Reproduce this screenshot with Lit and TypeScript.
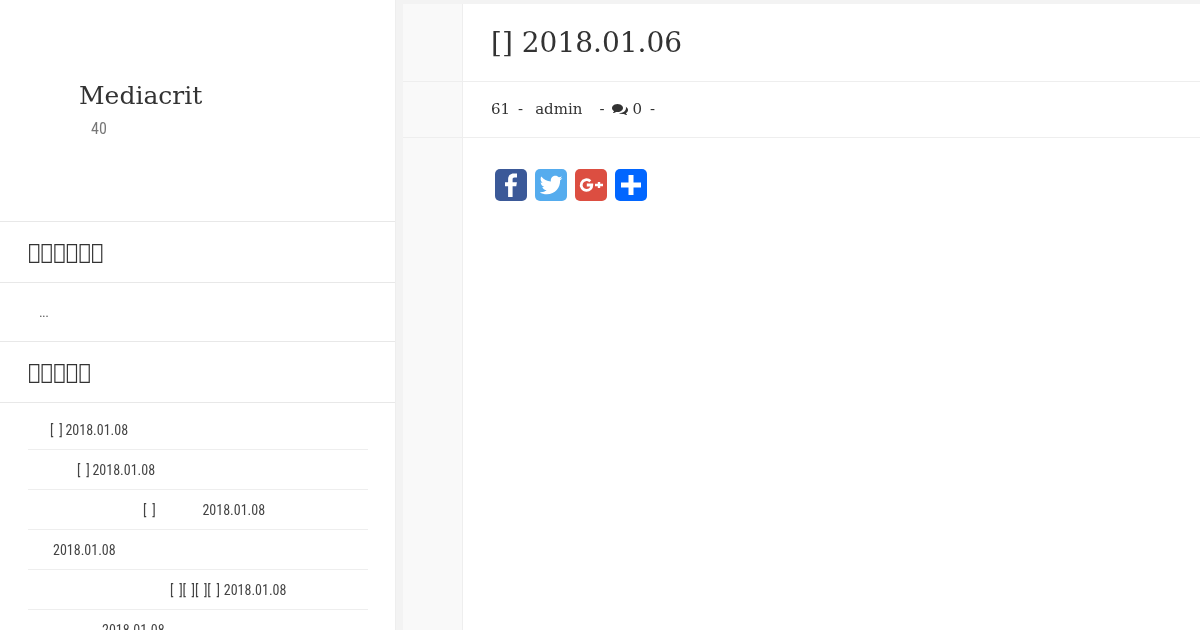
import { LitElement, html, css } from "lit";
import { customElement } from "lit/decorators.js";

@customElement("app-root")
export class AppRoot extends LitElement {
  static styles = css`
    :host { display: block; width: 1200px; height: 630px; overflow: hidden; background: #fff; color: #333; font-family: "DejaVu Serif", serif; }
    .page { display: flex; height: 630px; overflow: hidden; will-change: transform; }
    .side { width: 395px; flex: none; border-right: 1px solid #eee; }
    .gutter { width: 7px; flex: none; background: #f3f3f3; }
    .main { flex: 1; display: grid; grid-template-columns: 60px 1fr; grid-template-rows: 4px 78px 56px 1fr; }
    .strip { grid-column: 1 / 3; background: #f3f3f3; }
    .brand { height: 222px; box-sizing: border-box; padding: 80px 0 0 79px; border-bottom: 1px solid #e8e8e8; }
    .brand h1 { margin: 0; font-size: 25px; font-weight: 400; line-height: 32px; }
    .brand p { margin: 7px 0 0 12px; font: 16px/20px "Roboto", sans-serif; font-stretch: 75%; color: #777; }
    .head { height: 61px; box-sizing: border-box; padding: 0 28px; display: flex; align-items: center; font-size: 21px; border-bottom: 1px solid #e8e8e8; }
    .box { height: 59px; box-sizing: border-box; padding: 0 39px; display: flex; align-items: center; border-bottom: 1px solid #e8e8e8; font: 14px "Roboto", sans-serif; font-stretch: 75%; letter-spacing: -0.6px; color: #666; }
    ul { list-style: none; margin: 0 27px 0 28px; padding: 7px 0 0; }
    li { height: 40px; box-sizing: border-box; border-bottom: 1px solid #eee; display: flex; align-items: center; font: 14px "Roboto", sans-serif; font-stretch: 75%; color: #444; white-space: pre; }
    .br { letter-spacing: -0.25px; }
    .rail { border-right: 1px solid #eee; background: #f9f9f9; }
    .line { border-bottom: 1px solid #eee; }
    .cell { padding-left: 28px; display: flex; align-items: center; }
    h2 { margin: 0; font-size: 28px; font-weight: 400; }
    .meta { font-size: 15px; padding-bottom: 2px; box-sizing: border-box; }
    .m8 { margin-left: 8px; }
    .m12 { margin-left: 12px; }
    .m17 { margin-left: 17px; }
    .m4 { margin-left: 4px; }
    .meta svg { width: 16px; height: 14px; margin-left: 8px; display: block; }
    .share { grid-column: 2; padding: 31px 0 0 32px; display: flex; gap: 8px; align-items: flex-start; }
    .ico { width: 32px; height: 32px; border-radius: 5px; display: block; }
    .tall { grid-row: 4; grid-column: 1; }
  `;
  render() {
    const rows: [number, string, number][] = [
      [22, "[  ]", 3],
      [49, "[  ]", 3],
      [115, "[  ]", 47],
      [25, "", 0],
      [142, "[  ][  ][  ][  ]", 4],
      [74, "", 0],
    ];
    return html`<div class="page">
      <div class="side">
        <div class="brand"><h1>Mediacrit</h1><p>40</p></div>
        <div class="head">\uE000\uE000\uE000\uE000\uE000\uE000</div>
        <div class="box">...</div>
        <div class="head">\uE000\uE000\uE000\uE000\uE000</div>
        <ul>${rows.map(([x, t, g]) => html`<li style="padding-left:${x}px"><span class="br">${t}</span><span style="margin-left:${g}px">2018.01.08</span></li>`)}</ul>
      </div>
      <div class="gutter"></div>
      <div class="main">
        <div class="strip"></div>
        <div class="rail line"></div>
        <div class="cell line"><h2>[] 2018.01.06</h2></div>
        <div class="rail line"></div>
        <div class="cell line meta"><span>61</span><span class="m8">-</span><span class="m12">admin</span><span class="m17">-</span><svg viewBox="0 0 2048 1792"><path fill="#333" d="M1408 768q0 139-94 257t-256.500 186.500-353.500 68.500q-86 0-176-16-124 88-278 128-36 9-86 16h-3q-11 0-20.500-8t-11.500-21q-1-3-1-6.500t.5-6.500 2-6l2.500-5 3.500-5.500 4-5 4.500-5 4-4.500q5-6 23-25t26-29.500 22.500-29 25-38.500 20.500-44q-124-72-195-177t-71-224q0-139 94-257t256.500-186.500 353.500-68.500 353.500 68.500 256.500 186.500 94 257zm640 256q0 120-71 224.500t-195 176.500q10 24 20.500 44t25 38.500 22.500 29 26 29.500 23 25q1 1 4 4.500t4.500 5 4 5 3.500 5.500l2.500 5 2 6 .5 6.500-1 6.500q-3 14-13 22t-22 7q-50-7-86-16-154-40-278-128-90 16-176 16-271 0-472-132 58 4 88 4 161 0 309-45t264-129q125-92 192-212t67-254q0-77-23-152 129 71 204 178t75 230z"/></svg><span class="m4">0</span><span class="m8">-</span></div>
        <div class="rail tall"></div>
        <div class="share">
          <svg class="ico" viewBox="0 0 32 32"><rect width="32" height="32" fill="#3B5998"/><path fill="#fff" d="M22 4.500v4h-2.400c-1.700 0-2 .8-2 2v2.700h4.300l-.6 4h-3.700V28h-4.500V17.200H10v-4h3.100v-3C13.100 6.700 15.400 4.500 18.700 4.500c1.500 0 2.800.1 3.300 0z"/></svg>
          <svg class="ico" viewBox="0 0 32 32"><rect width="32" height="32" fill="#55ACEE"/><path transform="translate(.8 .8) scale(.95)" fill="#fff" d="M28 8.600c-.9.400-1.800.7-2.800.8 1-.6 1.800-1.600 2.200-2.700-1 .6-2 1-3.100 1.200-.9-1-2.200-1.600-3.600-1.600-2.700 0-4.900 2.200-4.900 4.900 0 .4 0 .8.100 1.100-4.100-.2-7.700-2.200-10.100-5.200-.4.700-.7 1.600-.7 2.500 0 1.700.9 3.200 2.200 4.100-.8 0-1.600-.2-2.200-.6v.1c0 2.400 1.700 4.400 3.900 4.800-.4.100-.8.200-1.300.2-.3 0-.6 0-.9-.1.600 2 2.400 3.400 4.600 3.400-1.700 1.300-3.800 2.100-6.100 2.100-.4 0-.8 0-1.200-.1 2.200 1.400 4.800 2.200 7.500 2.200 9.100 0 14-7.500 14-14v-.6c1-.7 1.800-1.600 2.400-2.500z"/></svg>
          <svg class="ico" viewBox="0 0 32 32"><rect width="32" height="32" fill="#DC4E41"/><path fill="none" stroke="#fff" stroke-width="2.800" d="M15.300 12.300A5.300 5.300 0 1 0 11.500 21.300C14.700 21.300 16.800 19.200 16.800 16H11.800"/><path fill="#fff" d="M22.800 13h2.400v1.800H28v2.400h-2.800V19h-2.400v-1.800H20v-2.400h2.800z"/></svg>
          <svg class="ico" viewBox="0 0 32 32"><rect width="32" height="32" fill="#0166FF"/><path fill="#fff" d="M13.500 6h5v7.500H26v5h-7.500V26h-5v-7.500H6v-5h7.500z"/></svg>
        </div>
      </div>
    </div>`;
  }
}
